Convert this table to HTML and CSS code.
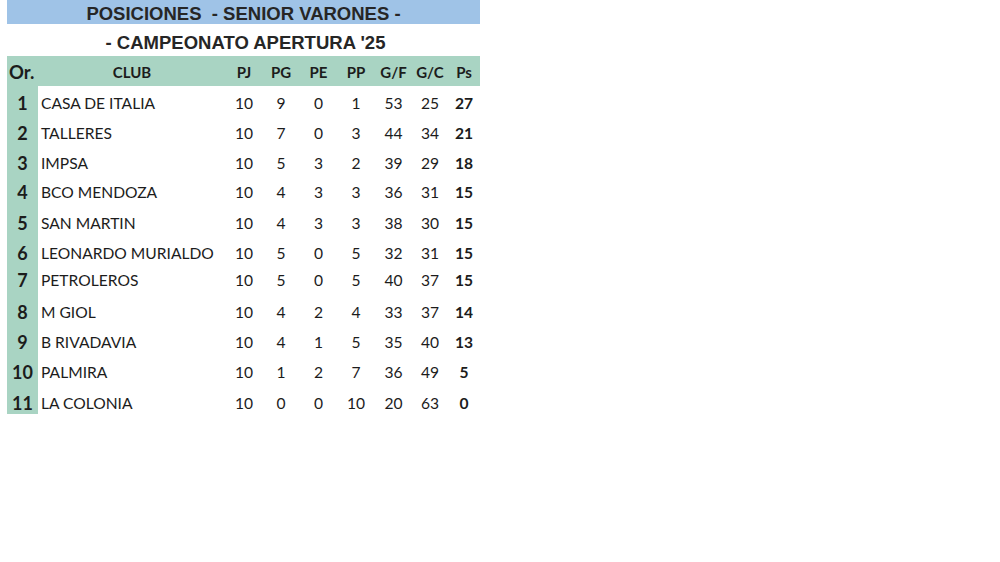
FILE: index.html
```html
<!DOCTYPE html>
<html lang="es">
<head>
<meta charset="utf-8">
<title>Posiciones Senior Varones</title>
<link rel="stylesheet" href="styles.css">
</head>
<body>
<div class="sheet">
  <div class="title">POSICIONES&nbsp; - SENIOR VARONES -</div>
  <div class="subtitle">- CAMPEONATO APERTURA '25</div>
  <table class="standings">
    <colgroup>
      <col class="c-or"><col class="c-club"><col class="c-pj"><col class="c-pg"><col class="c-pe"><col class="c-pp"><col class="c-gf"><col class="c-gc"><col class="c-ps">
    </colgroup>
    <thead>
      <tr><th class="or">Or.</th><th>CLUB</th><th>PJ</th><th>PG</th><th>PE</th><th>PP</th><th>G/F</th><th>G/C</th><th>Ps</th></tr>
    </thead>
    <tbody>
      <tr class="r1"><td class="or">1</td><td class="club">CASA DE ITALIA</td><td>10</td><td>9</td><td>0</td><td>1</td><td>53</td><td>25</td><td class="ps">27</td></tr>
      <tr class="r2"><td class="or">2</td><td class="club">TALLERES</td><td>10</td><td>7</td><td>0</td><td>3</td><td>44</td><td>34</td><td class="ps">21</td></tr>
      <tr class="r2"><td class="or">3</td><td class="club">IMPSA</td><td>10</td><td>5</td><td>3</td><td>2</td><td>39</td><td>29</td><td class="ps">18</td></tr>
      <tr class="r4"><td class="or">4</td><td class="club">BCO MENDOZA</td><td>10</td><td>4</td><td>3</td><td>3</td><td>36</td><td>31</td><td class="ps">15</td></tr>
      <tr class="r5"><td class="or">5</td><td class="club">SAN MARTIN</td><td>10</td><td>4</td><td>3</td><td>3</td><td>38</td><td>30</td><td class="ps">15</td></tr>
      <tr class="r2"><td class="or">6</td><td class="club">LEONARDO MURIALDO</td><td>10</td><td>5</td><td>0</td><td>5</td><td>32</td><td>31</td><td class="ps">15</td></tr>
      <tr class="r7"><td class="or">7</td><td class="club">PETROLEROS</td><td>10</td><td>5</td><td>0</td><td>5</td><td>40</td><td>37</td><td class="ps">15</td></tr>
      <tr class="r8"><td class="or">8</td><td class="club">M GIOL</td><td>10</td><td>4</td><td>2</td><td>4</td><td>33</td><td>37</td><td class="ps">14</td></tr>
      <tr class="r2"><td class="or">9</td><td class="club">B RIVADAVIA</td><td>10</td><td>4</td><td>1</td><td>5</td><td>35</td><td>40</td><td class="ps">13</td></tr>
      <tr class="r2"><td class="or">10</td><td class="club">PALMIRA</td><td>10</td><td>1</td><td>2</td><td>7</td><td>36</td><td>49</td><td class="ps">5</td></tr>
      <tr class="r11"><td class="or">11</td><td class="club">LA COLONIA</td><td>10</td><td>0</td><td>0</td><td>10</td><td>20</td><td>63</td><td class="ps">0</td></tr>
    </tbody>
  </table>
</div>
</body>
</html>
```
FILE: styles.css
```css
html, body {
  margin: 0;
  padding: 0;
  background: #ffffff;
}
body {
  width: 1000px;
  height: 562px;
  overflow: hidden;
}
.sheet {
  margin-left: 7px;
  width: 473px;
  color: #1c1c1c;
}
.title {
  height: 24px;
  background: #9fc3e7;
  font-family: "Liberation Sans", Arial, sans-serif;
  font-weight: bold;
  font-size: 18.5px;
  line-height: 27px;
  text-align: center;
  color: #262626;
  white-space: pre;
}
.subtitle {
  height: 32px;
  font-family: "Liberation Sans", Arial, sans-serif;
  font-weight: bold;
  font-size: 18.5px;
  line-height: 38px;
  text-align: center;
  color: #262626;
  padding-left: 4px;
}
.standings {
  border-collapse: collapse;
  table-layout: fixed;
  width: 473px;
  font-family: Lato, "Open Sans", sans-serif;
  font-size: 15.6px;
}
.c-or { width: 31px; }
.c-club { width: 188px; }
.c-pj { width: 36px; }
.c-pg { width: 38px; }
.c-pe { width: 37px; }
.c-pp { width: 38px; }
.c-gf { width: 37px; }
.c-gc { width: 36px; }
.c-ps { width: 32px; }
.standings th {
  box-sizing: border-box;
  background: #a9d4c3;
  height: 30px;
  padding: 1px 0 0 0;
  font-weight: bold;
  text-align: center;
  vertical-align: middle;
  font-size: 15px;
}
.standings th.or {
  font-size: 18.5px;
  text-align: left;
  padding-left: 2px;
}
.standings td {
  box-sizing: border-box;
  padding: 0;
  text-align: center;
  vertical-align: middle;
  white-space: nowrap;
}
.standings td.or {
  background: #a9d4c3;
  font-weight: bold;
  font-size: 18px;
}
.standings td.club {
  text-align: left;
  padding-left: 3px;
}
.standings td.ps {
  font-weight: bold;
}
.standings tr.r1 td { height: 31px; padding-top: 3px; }
.standings tr.r2 td { height: 30px; padding-top: 2px; }
.standings tr.r4 td { height: 29px; padding-top: 1px; }
.standings tr.r5 td { height: 31px; padding-top: 3px; }
.standings tr.r7 td { height: 26px; padding-top: 0; }
.standings tr.r8 td { height: 33px; padding-top: 5px; }
.standings tr.r11 td { height: 28px; padding-top: 6px; }
```
